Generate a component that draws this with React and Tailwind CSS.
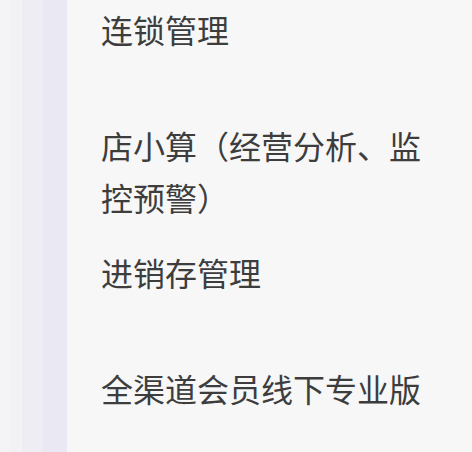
export default function App() {
  const items = [
    "连锁管理",
    "店小算（经营分析、监控预警）",
    "进销存管理",
    "全渠道会员线下专业版",
  ];
  return (
    <div className="flex w-[472px] h-[452px] overflow-hidden bg-[#f7f7f7]">
      <div className="flex h-full w-[67px] shrink-0">
        <div className="w-[10px] bg-[#f4f4f6]" />
        <div className="w-[12px] bg-[#f2f2f5]" />
        <div className="w-[21px] bg-[#eeedf4]" />
        <div className="w-[24px] bg-[#e9e8f3]" />
      </div>
      <div
        className="flex flex-col pl-[34px] pt-[3px] w-[386px] text-[32px] leading-[52px] text-[#3d3d3d]"
        style={{ fontFamily: '"Noto Sans CJK SC", "Noto Sans", sans-serif' }}
      >
        {items.map((t) => (
          <div key={t} className="shrink-0 min-h-[116px] pb-[23px] w-[340px]">
            {t}
          </div>
        ))}
      </div>
    </div>
  );
}
